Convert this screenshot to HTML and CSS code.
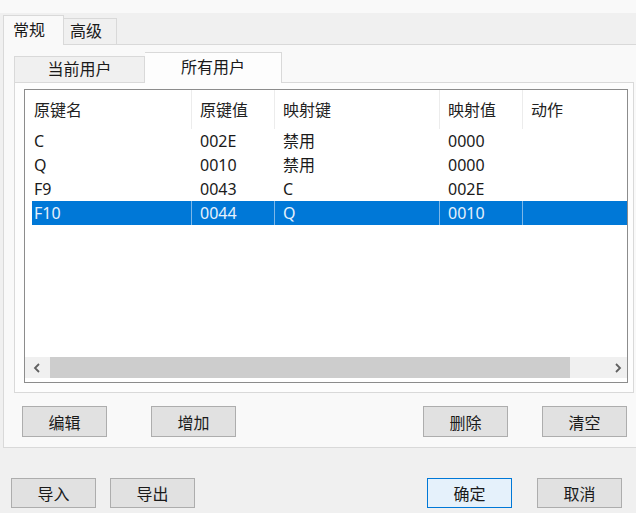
FILE: index.html
```html
<!DOCTYPE html>
<html lang="zh-CN">
<head>
  <meta charset="UTF-8" />
  <meta name="viewport" content="width=device-width, initial-scale=1.0"/>
  <title>按键映射</title>
  <link rel="stylesheet" href="styles.css">
</head>
<body>
  <div class="top-strip"></div>
  <div class="main-tabs">
    <div class="main-tab active">常规</div>
    <div class="main-tab">高级</div>
  </div>
  <div class="main-panel">
    <div class="sub-tabs">
      <div class="sub-tab">当前用户</div>
      <div class="sub-tab active">所有用户</div>
    </div>
    <div class="sub-panel">
      <div class="list">
        <div class="row header">
          <div class="cell">原键名</div>
          <div class="cell">原键值</div>
          <div class="cell">映射键</div>
          <div class="cell">映射值</div>
          <div class="cell">动作</div>
        </div>
        <div class="row">
          <div class="cell">C</div>
          <div class="cell">002E</div>
          <div class="cell">禁用</div>
          <div class="cell">0000</div>
          <div class="cell"></div>
        </div>
        <div class="row">
          <div class="cell">Q</div>
          <div class="cell">0010</div>
          <div class="cell">禁用</div>
          <div class="cell">0000</div>
          <div class="cell"></div>
        </div>
        <div class="row">
          <div class="cell">F9</div>
          <div class="cell">0043</div>
          <div class="cell">C</div>
          <div class="cell">002E</div>
          <div class="cell"></div>
        </div>
        <div class="row selected">
          <div class="cell">F10</div>
          <div class="cell">0044</div>
          <div class="cell">Q</div>
          <div class="cell">0010</div>
          <div class="cell"></div>
        </div>
        <div class="filler"></div>
        <div class="hscroll">
          <div class="arrow">
            <svg width="8" height="10" viewBox="0 0 8 10"><path d="M6 1 L2 5 L6 9" fill="none" stroke="#606060" stroke-width="1.8"/></svg>
          </div>
          <div class="track"><div class="thumb"></div></div>
          <div class="arrow">
            <svg width="8" height="10" viewBox="0 0 8 10"><path d="M2 1 L6 5 L2 9" fill="none" stroke="#606060" stroke-width="1.8"/></svg>
          </div>
        </div>
      </div>
    </div>
    <div class="button-row">
      <div class="group">
        <button class="btn">编辑</button>
        <button class="btn">增加</button>
      </div>
      <div class="group narrow">
        <button class="btn">删除</button>
        <button class="btn">清空</button>
      </div>
    </div>
  </div>
  <div class="footer">
    <div class="group">
      <button class="btn">导入</button>
      <button class="btn">导出</button>
    </div>
    <div class="group wide">
      <button class="btn default">确定</button>
      <button class="btn">取消</button>
    </div>
  </div>
</body>
</html>
```

FILE: styles.css
```css
* {
  box-sizing: border-box;
}
body {
  margin: 0;
  width: 636px;
  height: 513px;
  overflow: hidden;
  background: #f0f0f0;
  font-family: "Noto Sans", "Noto Sans CJK SC", sans-serif;
  font-size: 16px;
  color: #1a1a1a;
}
.top-strip {
  height: 13px;
  background: #f9f9f9;
}
.main-tabs {
  display: flex;
  align-items: flex-end;
  height: 31px;
  padding-left: 3px;
}
.main-tab {
  width: 53px;
  height: 26px;
  line-height: 24px;
  padding-left: 6px;
  border: 1px solid #d9d9d9;
  border-bottom: none;
  border-left: none;
  background: #f0f0f0;
}
.main-tab.active {
  width: 61px;
  height: 30px;
  line-height: 28px;
  padding-left: 9px;
  margin-bottom: -1px;
  border-left: 1px solid #d9d9d9;
  background: #f9f9f9;
  position: relative;
}
.main-panel {
  margin-left: 3px;
  height: 404px;
  padding: 7px 0 0 10px;
  border: 1px solid #d9d9d9;
  border-right: none;
  background: #f9f9f9;
}
.sub-tabs {
  display: flex;
  align-items: flex-end;
  height: 30px;
}
.sub-tab {
  width: 131px;
  height: 26px;
  line-height: 25px;
  text-align: center;
  border: 1px solid #d9d9d9;
  border-bottom: none;
  background: #f0f0f0;
}
.sub-tab.active {
  width: 137px;
  height: 31px;
  line-height: 29px;
  margin-bottom: -1px;
  border-left: none;
  background: #fdfdfd;
  position: relative;
}
.sub-panel {
  width: 620px;
  height: 311px;
  padding: 6px 0 0 9px;
  border: 1px solid #d9d9d9;
  background: #fdfdfd;
}
.list {
  display: flex;
  flex-direction: column;
  width: 604px;
  height: 294px;
  padding-bottom: 4px;
  border: 1px solid #8c8c8c;
  background: #fff;
}
.row {
  display: grid;
  grid-template-columns: 167px 83px 165px 83px 1fr;
  height: 24px;
  line-height: 24px;
}
.cell {
  padding-left: 8px;
  white-space: nowrap;
}
.row .cell:first-child {
  padding-left: 9px;
}
.row.header {
  height: 39px;
  line-height: 33px;
  padding-top: 4px;
  color: #222;
}
.row.header .cell {
  border-right: 1px solid #ececec;
  margin-top: -4px;
  padding-top: 4px;
}
.row.header .cell:last-child {
  border-right: none;
}
.row.selected {
  background: linear-gradient(to right, transparent 7px, #0078d7 7px);
  color: #e6f1fc;
}
.row.selected .cell {
  border-right: 1px solid #7db7e8;
}
.row.selected .cell:last-child {
  border-right: none;
}
.filler {
  flex: 1;
}
.hscroll {
  display: flex;
  height: 21px;
  background: #f0f0f0;
}
.arrow {
  width: 23px;
  display: flex;
  align-items: center;
  justify-content: center;
}
.hscroll .arrow:last-child {
  width: 18px;
}
.track {
  flex: 1;
  padding-left: 2px;
}
.thumb {
  width: 520px;
  height: 100%;
  background: #cdcdcd;
}
.button-row {
  display: flex;
  justify-content: space-between;
  width: 620px;
  margin-top: 13px;
  padding: 0 7px 0 8px;
}
.group {
  display: flex;
  gap: 44px;
}
.group.narrow {
  gap: 34px;
}
.btn {
  width: 85px;
  height: 31px;
  padding: 0;
  border: 1px solid #adadad;
  background: #e1e1e1;
  font-family: "Noto Sans CJK SC", sans-serif;
  font-size: 16px;
  color: #1a1a1a;
}
.btn.default {
  border-color: #0078d7;
  background: #e5f1fb;
}
.footer {
  display: flex;
  justify-content: space-between;
  margin-top: 30px;
  padding: 0 14px 0 11px;
}
.footer .btn {
  height: 30px;
}
.footer .group {
  gap: 14px;
}
.footer .group.wide {
  gap: 25px;
}
```
